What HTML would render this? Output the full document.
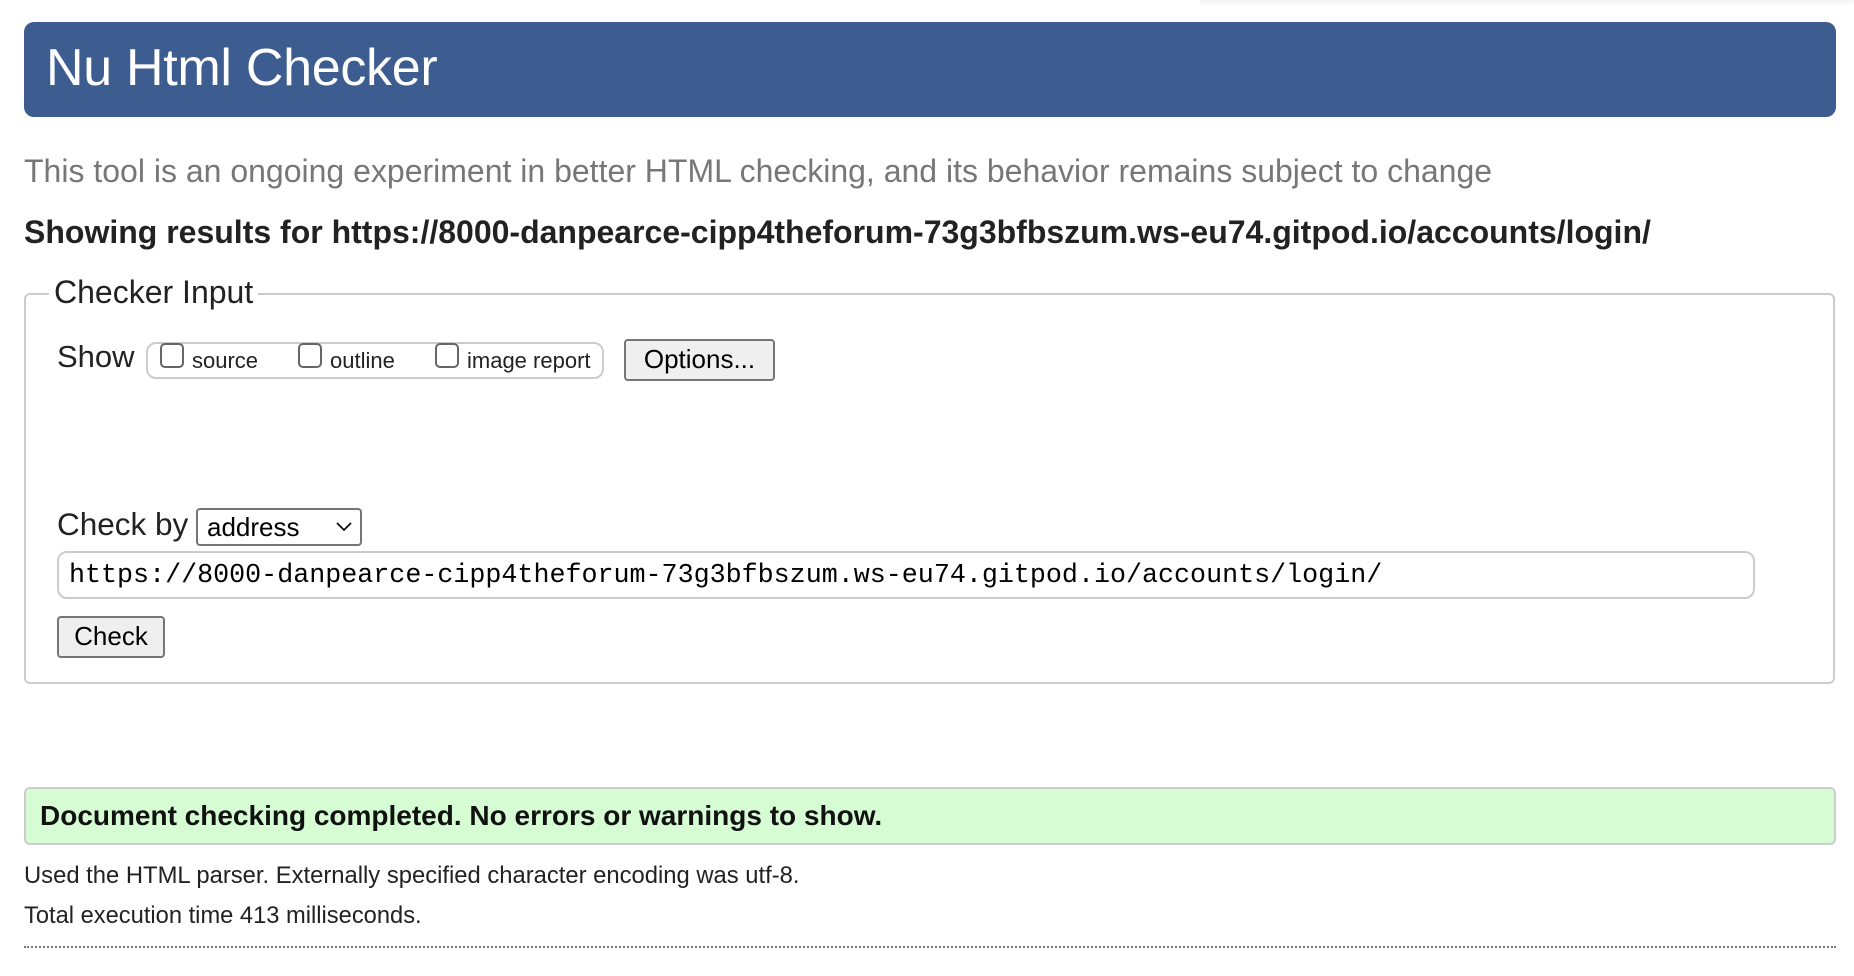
<!DOCTYPE html>
<html><head><meta charset="utf-8"><style>
*{box-sizing:border-box}
body{margin:0;width:1854px;height:976px;background:#fff;font-family:"Liberation Sans",Arial,sans-serif;color:#222;position:relative;overflow:hidden}
.a{position:absolute;white-space:nowrap}
#hdr{left:24px;top:22px;width:1812px;height:95px;background:#3d5c90;border-radius:10px}
#hdr span{position:absolute;left:22px;top:16px;font-size:52px;color:#fff;letter-spacing:-0.3px}
#top{left:1200px;top:0;width:654px;height:6px;background:linear-gradient(#f4f4f4,#fff)}
.fs{left:24px;top:293px;width:1811px;height:391px;border:2px solid #ccc;border-radius:6px}
.btn{background:#efefef;border:2px solid #767676;border-radius:4px;font-size:26px;color:#000;text-align:center}
.cb{width:24px;height:25px;border:2px solid #666;border-radius:5px;background:#fff}
</style></head><body>
<div class="a" id="top"></div>
<div class="a" id="hdr"><span>Nu Html Checker</span></div>
<div class="a" style="left:24px;top:153px;font-size:32px;color:#777">This tool is an ongoing experiment in better HTML checking, and its behavior remains subject to change</div>
<div class="a" style="left:24px;top:214px;font-size:32px;font-weight:bold;color:#222">Showing results for https://8000-danpearce-cipp4theforum-73g3bfbszum.ws-eu74.gitpod.io/accounts/login/</div>
<div class="a fs"></div>
<div class="a" style="left:49px;top:274px;padding:0 5px;background:#fff;font-size:32px;color:#222">Checker Input</div>
<div class="a" style="left:57px;top:339px;font-size:31px;color:#222">Show</div>
<div class="a" style="left:146px;top:342px;width:458px;height:37px;border:2px solid #ccc;border-radius:10px"></div>
<div class="a cb" style="left:160px;top:343px"></div>
<div class="a" style="left:192px;top:348px;font-size:22px">source</div>
<div class="a cb" style="left:298px;top:343px"></div>
<div class="a" style="left:330px;top:348px;font-size:22px">outline</div>
<div class="a cb" style="left:435px;top:343px"></div>
<div class="a" style="left:467px;top:348px;font-size:22px">image report</div>
<div class="a btn" style="left:624px;top:339px;width:151px;height:42px;line-height:36px">Options...</div>
<div class="a" style="left:57px;top:506px;font-size:31.5px;color:#222">Check by</div>
<div class="a" style="left:196px;top:508px;width:166px;height:38px;border:2px solid #767676;border-radius:4px;font-size:26px;color:#000;padding-left:9px;line-height:34px">address
<svg style="position:absolute;right:8px;top:12px" width="16" height="10" viewBox="0 0 16 10"><path d="M1 1l7 7 7-7" fill="none" stroke="#000" stroke-width="1.6"/></svg></div>
<div class="a" style="left:57px;top:551px;width:1698px;height:48px;border:2px solid #ccc;border-radius:10px;font-family:'Liberation Mono','DejaVu Sans Mono',monospace;font-size:26.7px;color:#000;padding-left:10px;line-height:46px">https://8000-danpearce-cipp4theforum-73g3bfbszum.ws-eu74.gitpod.io/accounts/login/</div>
<div class="a btn" style="left:57px;top:616px;width:108px;height:42px;line-height:36px">Check</div>
<div class="a" style="left:24px;top:787px;width:1812px;height:58px;background:#d5fcd3;border:2px solid #ccc;border-radius:6px"></div>
<div class="a" style="left:40px;top:800px;font-size:28px;font-weight:bold;color:#111">Document checking completed. No errors or warnings to show.</div>
<div class="a" style="left:24px;top:862px;font-size:23.8px;color:#222">Used the HTML parser. Externally specified character encoding was utf-8.</div>
<div class="a" style="left:24px;top:903px;font-size:23.7px;color:#222">Total execution time 413 milliseconds.</div>
<div class="a" style="left:24px;top:946px;width:1812px;border-top:2px dotted #777"></div>
</body></html>
